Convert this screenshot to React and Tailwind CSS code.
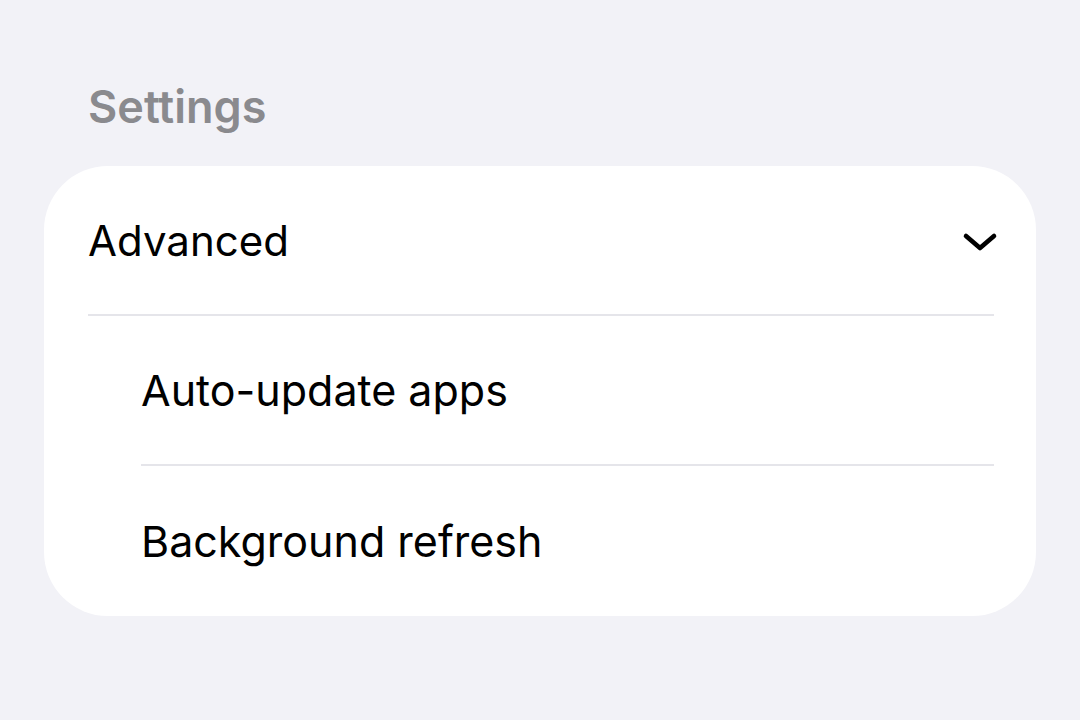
const rows = ['Auto-update apps', 'Background refresh'];

const Chevron = () => (
  <svg width="36" height="22" viewBox="0 0 36 22" fill="none" className="mt-[6px] shrink-0">
    <path
      d="M4 4 L18 16 L32 4"
      stroke="#000"
      strokeWidth="4.6"
      strokeLinecap="round"
      strokeLinejoin="round"
    />
  </svg>
);

export default function App() {
  return (
    <div
      className="min-h-[720px] w-full bg-[#f2f2f7] px-[44px] pt-[78px]"
      style={{ fontFamily: 'Inter, "Noto Sans", sans-serif' }}
    >
      <h1 className="pl-[44px] text-[45px] leading-[58px] font-semibold text-[#8a8a8e]">Settings</h1>
      <div className="mt-[30px] rounded-[64px] bg-white pl-[44px] pr-[38px]">
        <div className="flex h-[148px] items-center justify-between">
          <span className="text-[42px] text-black">Advanced</span>
          <Chevron />
        </div>
        <div className="mr-[4px] h-[2px] bg-[#e5e5ea]" />
        <div className="pl-[53px] pr-[4px]">
          {rows.map((label, i) => (
            <div key={label}>
              {i > 0 && <div className="h-[2px] bg-[#e5e5ea]" />}
              <div className={`flex items-center ${i === rows.length - 1 ? 'h-[150px]' : 'h-[148px]'}`}>
                <span className="text-[43px] text-black">{label}</span>
              </div>
            </div>
          ))}
        </div>
      </div>
    </div>
  );
}
